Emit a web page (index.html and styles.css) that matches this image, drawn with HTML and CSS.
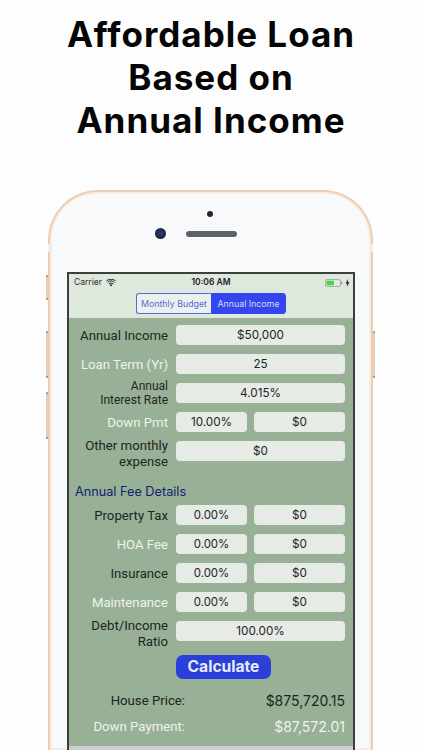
FILE: index.html
```html
<!DOCTYPE html>
<html lang="en">
<head>
<meta charset="utf-8">
<title>Affordable Loan</title>
<link rel="stylesheet" href="styles.css">
</head>
<body>
<div class="page">
  <h1 class="headline">Affordable Loan<br>Based on<br>Annual Income</h1>
  <div class="device">
    <span class="btn btn-mute"></span>
    <span class="btn btn-up"></span>
    <span class="btn btn-down"></span>
    <span class="btn btn-power"></span>
    <span class="band band-left"></span>
    <span class="band band-right"></span>
    <div class="shell">
      <div class="sensors">
        <span class="dot"></span>
        <div class="cam-row"><span class="camera"></span><span class="speaker"></span></div>
      </div>
      <div class="screen">
        <div class="head">
          <div class="status">
            <div class="status-left">
              <span>Carrier</span>
              <svg class="wifi" viewBox="0 0 12 9" width="10" height="8"><path d="M6 8.6 4.3 6.6a2.6 2.6 0 0 1 3.4 0Z" fill="#1c211d"/><path d="M3.4 5.5a4 4 0 0 1 5.2 0M1.9 3.7a6.2 6.2 0 0 1 8.2 0M.5 2a8.300 8.300 0 0 1 11 0" fill="none" stroke="#1c211d" stroke-width="1.15"/></svg>
            </div>
            <span class="time">10:06 AM</span>
            <div class="status-right">
              <svg viewBox="0 0 24 10" width="18" height="8"><rect x=".5" y=".5" width="20" height="9" rx="2" fill="#e6ece4" stroke="#8a938a"/><rect x="2" y="2" width="10" height="6" rx="1" fill="#3fd74f"/><rect x="21.500" y="3.500" width="1.500" height="3" fill="#8a938a"/></svg>
              <svg viewBox="0 0 6 10" width="5" height="8"><path d="M3.800 0 .5 5.600h2.100L2 10l3.500-6H3.300Z" fill="#1c211d"/></svg>
            </div>
          </div>
          <div class="segments">
            <span class="seg">Monthly Budget</span>
            <span class="seg seg-on">Annual Income</span>
          </div>
        </div>
        <div class="form">
          <div class="row"><span class="lbl">Annual Income</span><span class="field">$50,000</span></div>
          <div class="row"><span class="lbl light">Loan Term (Yr)</span><span class="field">25</span></div>
          <div class="row"><span class="lbl small">Annual<br>Interest Rate</span><span class="field">4.015%</span></div>
          <div class="row"><span class="lbl light">Down Pmt</span><span class="field pct">10.00%</span><span class="field amt">$0</span></div>
          <div class="row"><span class="lbl tall">Other monthly<br>expense</span><span class="field">$0</span></div>
          <div class="section">Annual Fee Details</div>
          <div class="row"><span class="lbl">Property Tax</span><span class="field pct sm">0.00%</span><span class="field amt">$0</span></div>
          <div class="row"><span class="lbl light">HOA Fee</span><span class="field pct sm">0.00%</span><span class="field amt">$0</span></div>
          <div class="row"><span class="lbl">Insurance</span><span class="field pct sm">0.00%</span><span class="field amt">$0</span></div>
          <div class="row"><span class="lbl light">Maintenance</span><span class="field pct sm">0.00%</span><span class="field amt">$0</span></div>
          <div class="row"><span class="lbl tall">Debt/Income<br>Ratio</span><span class="field">100.00%</span></div>
          <div class="action"><span class="calc">Calculate</span></div>
          <div class="result"><span class="r-lbl">House Price:</span><span class="r-val">$875,720.15</span></div>
          <div class="result second light"><span class="r-lbl">Down Payment:</span><span class="r-val">$87,572.01</span></div>
        </div>
        <div class="foot"></div>
      </div>
    </div>
  </div>
</div>
</body>
</html>
```
FILE: styles.css
```css
* { box-sizing: border-box; }
html, body { margin: 0; padding: 0; }
body { background: #fdfdfd; font-family: Inter, "Liberation Sans", sans-serif; }
.page { width: 422px; height: 750px; overflow: hidden; }
.headline {
  margin: 0; padding-top: 13px; height: 190px;
  text-align: center; color: #050505;
  font: 700 35px/43px Inter, sans-serif; letter-spacing: 1px;
}
.device { position: relative; margin-left: 48px; width: 325px; height: 560px; }
.shell {
  height: 100%; padding: 0 16px 0 17px;
  background: #f8f9fb;
  border: 2px solid #efcdb0; border-bottom: 0;
  border-radius: 50px 50px 0 0;
  box-shadow: inset 0 0 0 1.5px #f9e9dc;
}
.btn { position: absolute; width: 2px; border-radius: 1px; background: linear-gradient(#9c9084 0 2px, #e8cdb6 2px calc(100% - 2px), #9c9084 calc(100% - 2px)); }
.btn-mute { left: -2px; top: 85px; height: 25px; }
.btn-up { left: -2px; top: 141px; height: 47px; }
.btn-down { left: -2px; top: 202px; height: 47px; }
.btn-power { right: -2px; top: 141px; height: 47px; }
.band { position: absolute; top: 54px; width: 3.500px; height: 8px; background: #eceded; }
.band-left { left: 0; }
.band-right { right: 0; }
.sensors { height: 80px; padding-top: 19px; display: flex; flex-direction: column; align-items: center; }
.dot { width: 6px; height: 6px; margin-left: -2px; border-radius: 50%; background: #23262b; }
.cam-row { display: flex; align-items: center; gap: 20px; margin-top: 11px; margin-left: -30px; }
.camera { width: 11px; height: 11px; border-radius: 50%; background: radial-gradient(circle, #23366e 25%, #20242c 70%); }
.speaker { width: 51px; height: 6px; border-radius: 3px; background: #5e6166; }
.screen {
  height: 500px; width: 288px;
  border: 2px solid #3b403d; border-bottom: 0;
  background: #98b096; overflow: hidden;
}
.head { height: 44px; background: #dee8dc; }
.status {
  position: relative; height: 17px; padding: 0 3px 0 5px;
  display: flex; align-items: center; justify-content: space-between;
  font: 400 8.500px/17px Inter, sans-serif; color: #2a2f2b;
}
.status-left, .status-right { display: flex; align-items: center; gap: 4px; }
.status-right { gap: 2px; }
.time { position: absolute; left: 0; right: 0; text-align: center; font-weight: 600; color: #1c211d; }
.segments { display: flex; justify-content: center; margin: 2px 0 0; }
.seg {
  width: 75px; height: 21px; text-align: center;
  font: 400 8.800px/19px Inter, sans-serif; color: #5568e0;
  border: 1px solid #5568e6; border-right: 0; border-radius: 3px 0 0 3px; background: #ecf1ec;
}
.seg-on { background: #3346f0; color: #d5daf5; border: 1px solid #3346f0; border-radius: 0 3px 3px 0; }
.form { height: 428px; padding-top: 7px; }
.row { display: flex; height: 20px; margin-bottom: 9px; padding-right: 8px; color: #1d231e; }
.lbl {
  width: 99px; flex: none; margin-right: 8px; text-align: right;
  font: 400 13.200px/22px Roboto, sans-serif; color: #20261f; white-space: nowrap;
}
.small { font-size: 12px; line-height: 14px; margin-top: -4px; height: 28px; }
.tall { line-height: 16px; margin-top: -3px; height: 32px; }
.light, .light .r-lbl, .light .r-val { color: #eef3ec; }
.field {
  flex: 1; height: 20px; background: #e6ebe5; border-radius: 4px;
  text-align: center; font: 400 11.700px/21px Inter, sans-serif; color: #20261f;
}
.pct { flex: none; width: 71px; margin-right: 7px; }
.amt { flex: 1; }
.sm { font-size: 11.400px; }
.section { margin: 21px 0 0 6px; height: 20px; font: 400 12.700px/20px Inter, sans-serif; color: #10246f; }
.section + .row { margin-top: 3px; }
.action { margin: 14px 0 0 107px; height: 24px; }
.calc {
  display: block; width: 95px; height: 24px; border-radius: 7px;
  background: #2a40d8; color: #e6e9fa; text-align: center;
  font: 700 15.600px/24px Inter, sans-serif;
}
.result {
  display: flex; justify-content: space-between; align-items: center;
  height: 20px; margin-top: 12px; padding-right: 8px; color: #20261f;
}
.second { margin-top: 6px; }
.r-lbl { width: 116px; text-align: right; font: 400 13.200px/20px Roboto, sans-serif; }
.r-val { font: 400 14px/20px Inter, sans-serif; }
.foot { height: 40px; background: #cfcdd1; }
```
